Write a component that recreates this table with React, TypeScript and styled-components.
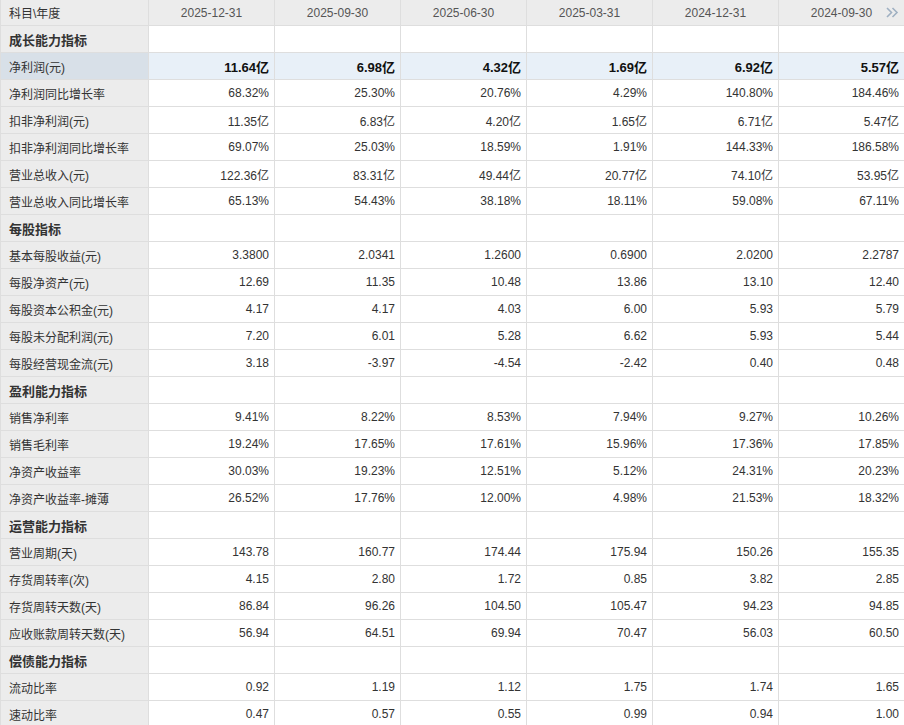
import React from "react";
import styled, { createGlobalStyle } from "styled-components";

const Global = createGlobalStyle`
  html, body { margin: 0; padding: 0; background: #fff; }
  body { font-family: "Liberation Sans", "Noto Sans CJK SC", sans-serif; font-size: 12px; color: #333; }
`;

const Table = styled.div`
  position: relative;
  width: 904px;
  overflow: hidden;
`;

const Row = styled.div<{ $header?: boolean }>`
  display: grid;
  grid-template-columns: 148px repeat(6, 126px);
  height: ${(p) => (p.$header ? 25 : 26)}px;
  border-bottom: 1px solid #dedede;
  box-sizing: content-box;
`;

const Cell = styled.div<{ $bg: string }>`
  border-left: 1px solid #dedede;
  background: ${(p) => p.$bg};
  display: flex;
  align-items: center;
  white-space: nowrap;
  overflow: hidden;
`;

const LabelCell = styled(Cell)<{ $section?: boolean }>`
  padding-left: 8px;
  font-size: ${(p) => (p.$section ? 13 : 12)}px;
  font-weight: ${(p) => (p.$section ? 700 : 400)};
  color: #333;
`;

const HeadCell = styled(Cell)`
  justify-content: center;
  color: #555;
  font-size: 12px;
`;

const HeadLabel = styled(Cell)`
  padding-left: 8px;
  color: #333;
  font-size: 12px;
`;

const ValueCell = styled(Cell)<{ $bold?: boolean }>`
  justify-content: flex-end;
  padding-right: 5px;
  font-size: ${(p) => (p.$bold ? 13 : 12)}px;
  font-weight: ${(p) => (p.$bold ? 700 : 400)};
  color: ${(p) => (p.$bold ? "#111" : "#333")};
`;

const More = styled.div`
  position: absolute;
  left: 886px;
  top: 7px;
  width: 13px;
  height: 11px;
`;

const dates = ["2025-12-31", "2025-09-30", "2025-06-30", "2025-03-31", "2024-12-31", "2024-09-30"];

type Item = { section: string } | { label: string; values: string[]; hl?: boolean };

const rows: Item[] = [
  { section: "成长能力指标" },
  { label: "净利润(元)", values: ["11.64亿", "6.98亿", "4.32亿", "1.69亿", "6.92亿", "5.57亿"], hl: true },
  { label: "净利润同比增长率", values: ["68.32%", "25.30%", "20.76%", "4.29%", "140.80%", "184.46%"] },
  { label: "扣非净利润(元)", values: ["11.35亿", "6.83亿", "4.20亿", "1.65亿", "6.71亿", "5.47亿"] },
  { label: "扣非净利润同比增长率", values: ["69.07%", "25.03%", "18.59%", "1.91%", "144.33%", "186.58%"] },
  { label: "营业总收入(元)", values: ["122.36亿", "83.31亿", "49.44亿", "20.77亿", "74.10亿", "53.95亿"] },
  { label: "营业总收入同比增长率", values: ["65.13%", "54.43%", "38.18%", "18.11%", "59.08%", "67.11%"] },
  { section: "每股指标" },
  { label: "基本每股收益(元)", values: ["3.3800", "2.0341", "1.2600", "0.6900", "2.0200", "2.2787"] },
  { label: "每股净资产(元)", values: ["12.69", "11.35", "10.48", "13.86", "13.10", "12.40"] },
  { label: "每股资本公积金(元)", values: ["4.17", "4.17", "4.03", "6.00", "5.93", "5.79"] },
  { label: "每股未分配利润(元)", values: ["7.20", "6.01", "5.28", "6.62", "5.93", "5.44"] },
  { label: "每股经营现金流(元)", values: ["3.18", "-3.97", "-4.54", "-2.42", "0.40", "0.48"] },
  { section: "盈利能力指标" },
  { label: "销售净利率", values: ["9.41%", "8.22%", "8.53%", "7.94%", "9.27%", "10.26%"] },
  { label: "销售毛利率", values: ["19.24%", "17.65%", "17.61%", "15.96%", "17.36%", "17.85%"] },
  { label: "净资产收益率", values: ["30.03%", "19.23%", "12.51%", "5.12%", "24.31%", "20.23%"] },
  { label: "净资产收益率-摊薄", values: ["26.52%", "17.76%", "12.00%", "4.98%", "21.53%", "18.32%"] },
  { section: "运营能力指标" },
  { label: "营业周期(天)", values: ["143.78", "160.77", "174.44", "175.94", "150.26", "155.35"] },
  { label: "存货周转率(次)", values: ["4.15", "2.80", "1.72", "0.85", "3.82", "2.85"] },
  { label: "存货周转天数(天)", values: ["86.84", "96.26", "104.50", "105.47", "94.23", "94.85"] },
  { label: "应收账款周转天数(天)", values: ["56.94", "64.51", "69.94", "70.47", "56.03", "60.50"] },
  { section: "偿债能力指标" },
  { label: "流动比率", values: ["0.92", "1.19", "1.12", "1.75", "1.74", "1.65"] },
  { label: "速动比率", values: ["0.47", "0.57", "0.55", "0.99", "0.94", "1.00"] },
];

const GRAY = "#ececec";

export default function App() {
  return (
    <>
      <Global />
      <Table>
        <Row $header>
          <HeadLabel $bg={GRAY}>科目\年度</HeadLabel>
          {dates.map((d) => (
            <HeadCell key={d} $bg={GRAY}>
              {d}
            </HeadCell>
          ))}
        </Row>
        {rows.map((r, i) =>
          "section" in r ? (
            <Row key={i}>
              <LabelCell $bg={GRAY} $section>
                {r.section}
              </LabelCell>
              {dates.map((d) => (
                <Cell key={d} $bg="#fff" />
              ))}
            </Row>
          ) : (
            <Row key={i}>
              <LabelCell $bg={r.hl ? "#d8e0e8" : GRAY}>{r.label}</LabelCell>
              {r.values.map((v, j) => (
                <ValueCell key={j} $bg={r.hl ? "#e8f0f8" : "#fff"} $bold={r.hl}>
                  {v}
                </ValueCell>
              ))}
            </Row>
          )
        )}
        <More>
          <svg width="13" height="11" viewBox="0 0 13 11" fill="none" stroke="#9fb0c2" strokeWidth="1.6">
            <path d="M1 1 L5.5 5.5 L1 10" />
            <path d="M6.5 1 L11 5.5 L6.5 10" />
          </svg>
        </More>
      </Table>
    </>
  );
}
